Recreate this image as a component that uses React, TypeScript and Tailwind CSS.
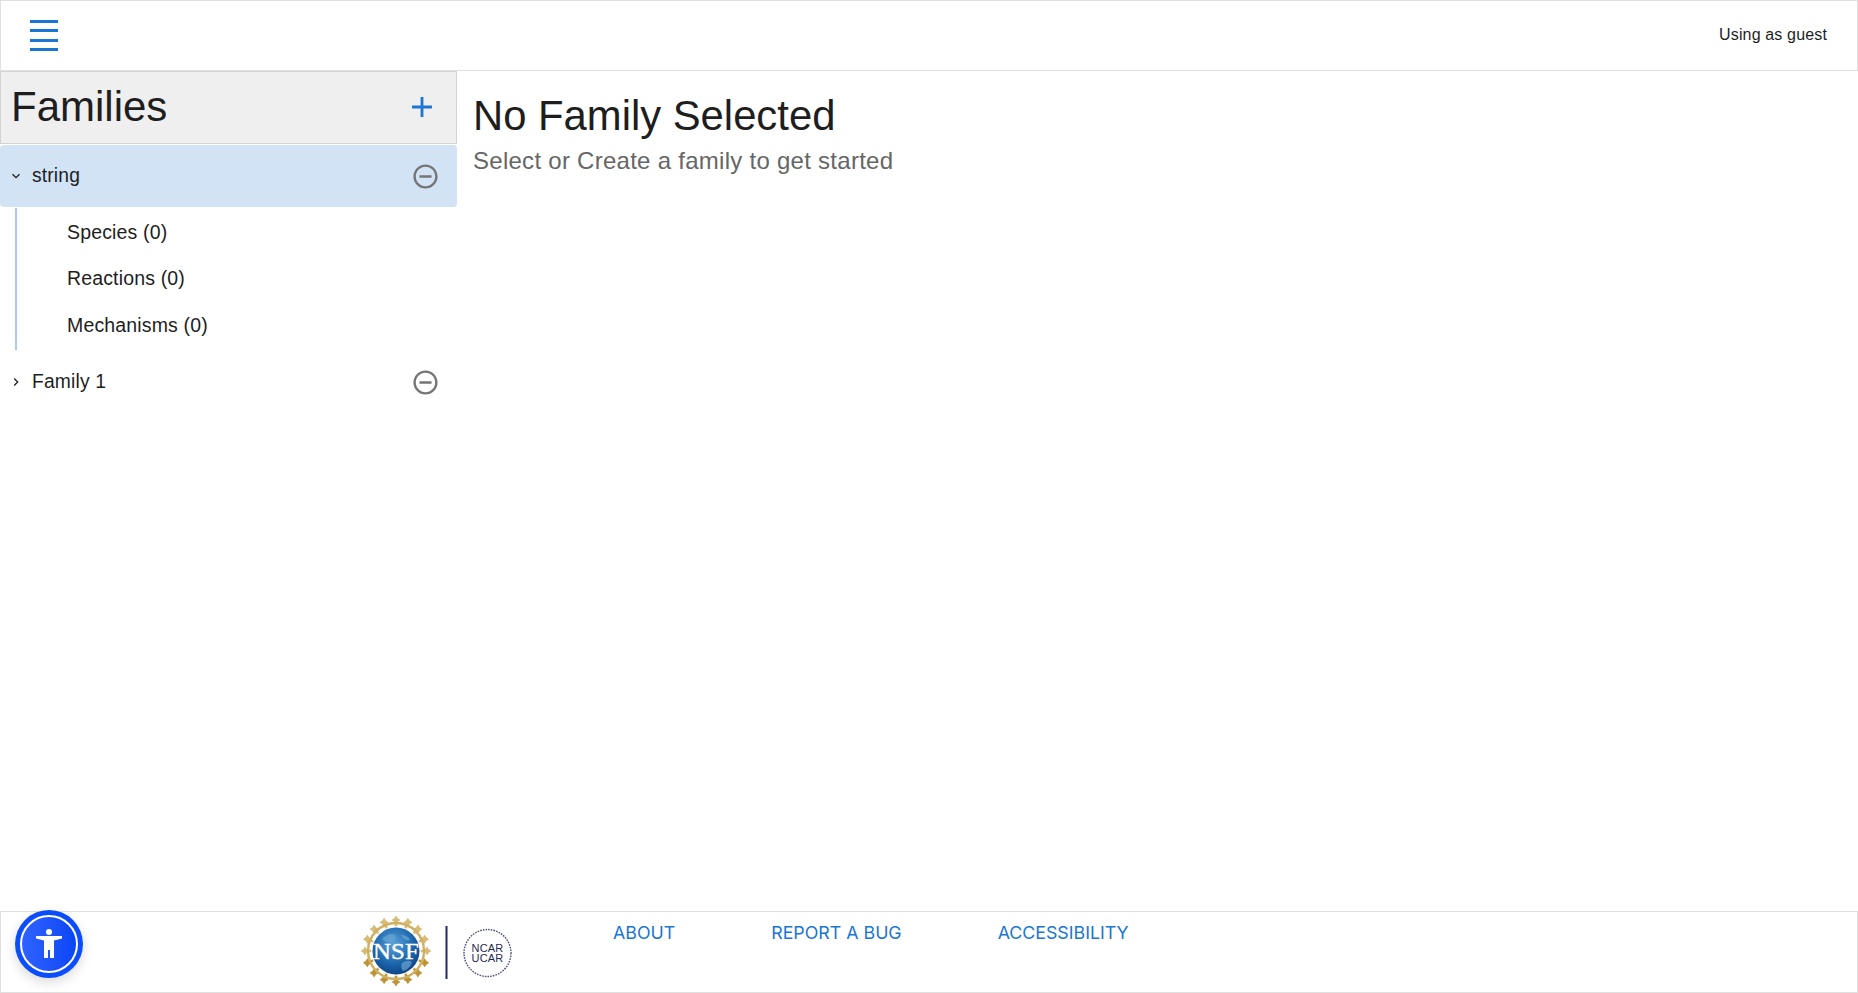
import React from 'react';

const RemoveCircle = () => (
  <svg width="29" height="29" viewBox="0 0 24 24" fill="#757575">
    <path d="M7 11v2h10v-2H7zm5-9C6.48 2 2 6.48 2 12s4.48 10 10 10 10-4.48 10-10S17.52 2 12 2zm0 18c-4.41 0-8-3.59-8-8s3.59-8 8-8 8 3.59 8 8-3.59 8-8 8z" />
  </svg>
);

const NsfNcarLogo = () => {
  const rays = Array.from({ length: 16 }, (_, i) => (i * 360) / 16);
  return (
    <svg width="156" height="78" viewBox="0 0 156 78">
      <defs>
        <radialGradient id="globe" cx="45%" cy="35%" r="70%">
          <stop offset="0%" stopColor="#5aa3dc" />
          <stop offset="60%" stopColor="#1c66ad" />
          <stop offset="100%" stopColor="#0d3f80" />
        </radialGradient>
      </defs>
      {rays.map(a => {
        const rad = (a * Math.PI) / 180;
        const x = 36 + Math.sin(rad) * 31;
        const y = 39 - Math.cos(rad) * 31;
        const gold = a > 90 && a < 270 ? '#bd9436' : '#d6bc76';
        return (
          <g key={a}>
            <polygon
              points={`${x},${y - 4.5} ${x + 1.8},${y - 1.8} ${x + 4.5},${y} ${x + 1.8},${y + 1.8} ${x},${y + 4.5} ${x - 1.8},${y + 1.8} ${x - 4.5},${y} ${x - 1.8},${y - 1.8}`}
              fill={gold}
            />
            <line x1="36" y1="39" x2={x} y2={y} stroke={gold} strokeWidth="2.6" />
          </g>
        );
      })}
      <circle cx="36" cy="39" r="28" fill="none" stroke="#cfb062" strokeWidth="2.4" />
      <circle cx="36" cy="39" r="25" fill="#ffffff" opacity="0.8" />
      <circle cx="36" cy="39" r="23.5" fill="url(#globe)" />
      <path d="M22 27 q7 -7 13 -4 q3 4 -3 7 q-6 1 -10 -3z M42 51 q6 -4 10 -1 q-2 7 -9 9 q-3 -4 -1 -8z M41 23 q6 0 9 5 q-5 2 -9 -5z" fill="#6aa6d1" opacity="0.7" />
      <text x="36" y="47" textAnchor="middle" fontFamily="'Liberation Serif', serif" fontSize="24" fill="#ffffff" stroke="#ffffff" strokeWidth="0.4" textLength="46" lengthAdjust="spacingAndGlyphs">NSF</text>
      <rect x="85.5" y="14" width="2" height="53" fill="#1f2a66" />
      <circle cx="127.5" cy="41" r="23.5" fill="#ffffff" stroke="#4b4f7c" strokeWidth="1.4" strokeDasharray="1.6 1.1" />
      <text x="127.5" y="39.5" textAnchor="middle" fontFamily="'Liberation Sans', sans-serif" fontSize="11" fill="#1f2a50">NCAR</text>
      <text x="127.5" y="50" textAnchor="middle" fontFamily="'Liberation Sans', sans-serif" fontSize="11" fill="#1f2a50">UCAR</text>
    </svg>
  );
};

const App: React.FC = () => {
  return (
    <div className="h-screen w-screen flex flex-col bg-white text-[#1e1e1e] font-['Liberation_Sans',Arial,sans-serif] tracking-[0.00938em] overflow-hidden">
      {/* Top bar */}
      <header className="h-[71px] shrink-0 flex items-center justify-between border border-[#e0e0e0] pl-[29px] pr-[30px]">
        <button className="flex flex-col gap-[6.3px]" aria-label="menu">
          <span className="block w-[28px] h-[3px] bg-[#1976d2]" />
          <span className="block w-[28px] h-[3px] bg-[#1976d2]" />
          <span className="block w-[28px] h-[3px] bg-[#1976d2]" />
          <span className="block w-[28px] h-[3px] bg-[#1976d2]" />
        </button>
        <span className="text-base mb-[2px]">Using as guest</span>
      </header>

      <div className="flex-1 flex min-h-0">
        {/* Family list */}
        <aside className="w-[457px] shrink-0">
          <div className="h-[73px] flex items-center justify-between bg-[#efefef] border border-[#d3d3d3] pl-[10px] pr-[17px]">
            <h2 className="text-[42px] tracking-normal leading-none mb-[2px]">Families</h2>
            <svg width="34" height="34" viewBox="0 0 24 24" fill="#1976d2" className="mb-[1px]">
              <path d="M19 13h-6v6h-2v-6H5v-2h6V5h2v6h6v2z" />
            </svg>
          </div>

          <div className="mt-px h-[62px] flex items-center bg-[#d1e3f5] rounded-[4px] pl-[11px] pr-[17px]">
            <svg width="10" height="10" viewBox="0 0 10 10" fill="none" stroke="#1e1e1e" strokeWidth="1.3">
              <path d="M1.5 3.2 L5 6.7 L8.5 3.2" />
            </svg>
            <span className="ml-[11px] flex-1 text-[19.3px]">string</span>
            <RemoveCircle />
          </div>

          <ul className="mt-px ml-[15px] h-[142px] border-l-2 border-[#a9c9ee] pl-[50px] pt-[2px] text-[19.5px]">
            <li className="h-[46px] flex items-center">Species (0)</li>
            <li className="h-[46px] flex items-center">Reactions (0)</li>
            <li className="h-[47px] flex items-center">Mechanisms (0)</li>
          </ul>

          <div className="mt-px h-[62px] flex items-center pl-[11px] pr-[17px]">
            <svg width="10" height="10" viewBox="0 0 10 10" fill="none" stroke="#1e1e1e" strokeWidth="1.3">
              <path d="M3.2 1.5 L6.7 5 L3.2 8.5" />
            </svg>
            <span className="ml-[11px] flex-1 text-[19.3px]">Family 1</span>
            <RemoveCircle />
          </div>
        </aside>

        {/* Main area */}
        <main className="flex-1 pl-[16px] pt-[21px]">
          <h1 className="text-[41.8px] tracking-normal leading-[48px]">No Family Selected</h1>
          <p className="text-[24px] tracking-[0.27px] leading-[30px] mt-[6px] text-[#666666]">Select or Create a family to get started</p>
        </main>
      </div>

      {/* Footer */}
      <footer className="h-[82px] shrink-0 flex items-start border border-[#e0e0e0] pl-[359px]">
        <NsfNcarLogo />
        <nav className="ml-[97px] pt-[7px] flex gap-[96px] text-[#1976d2] text-[17.8px] leading-[28px] tracking-normal font-['Inter',sans-serif]">
          <a>ABOUT</a>
          <a>REPORT A BUG</a>
          <a>ACCESSIBILITY</a>
        </nav>
      </footer>

      {/* Floating accessibility widget */}
      <button aria-label="accessibility" className="absolute left-[15px] top-[910px] w-[68px] h-[68px] rounded-full bg-[#0b4dfb] shadow-[0_4px_12px_rgba(0,0,0,0.15)] flex items-center justify-center">
        <span className="w-[58px] h-[58px] rounded-full border-2 border-white bg-linear-to-r from-[#2f62ff] to-[#0a46f5] flex items-center justify-center">
          <svg width="28" height="32" viewBox="0 0 28 32" fill="#ffffff">
            <circle cx="14" cy="4" r="3" />
            <path d="M1 8 H27 V10.5 L19 12.5 V30 H15 V22 H13 V30 H9 V12.5 L1 10.5 Z" />
          </svg>
        </span>
      </button>
    </div>
  );
};

export default App;
